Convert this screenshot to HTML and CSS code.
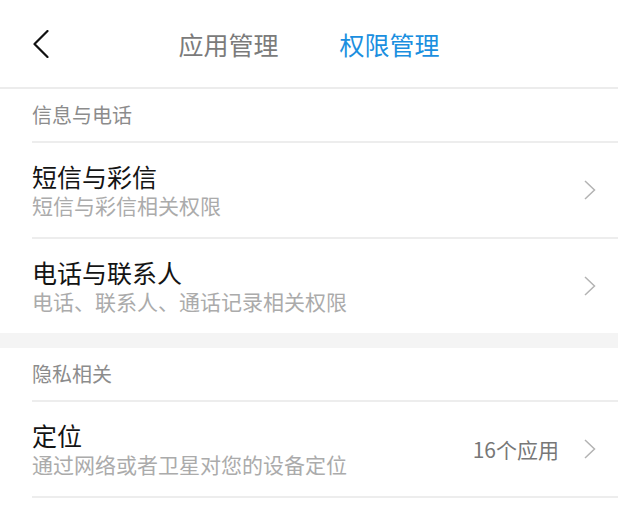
FILE: index.html
```html
<!DOCTYPE html>
<html lang="zh-CN">
<head>
<meta charset="utf-8">
<title>权限管理</title>
<link rel="stylesheet" href="styles.css">
</head>
<body>
<header class="topbar">
  <button class="back" aria-label="返回">
    <svg width="16" height="28" viewBox="0 0 16 28"><polyline points="14.5,1 1.5,14 14.5,27" fill="none" stroke="#111" stroke-width="2.2" stroke-linecap="round" stroke-linejoin="round"/></svg>
  </button>
  <nav class="tabs">
    <span class="tab">应用管理</span>
    <span class="tab active">权限管理</span>
  </nav>
  <span class="spacer"></span>
</header>

<section class="group">
  <div class="group-title">信息与电话</div>
  <div class="row">
    <div class="texts">
      <div class="title">短信与彩信</div>
      <div class="sub">短信与彩信相关权限</div>
    </div>
    <svg class="chev" width="12" height="20" viewBox="0 0 12 20"><polyline points="1,1 10.5,10 1,19" fill="none" stroke="#b3b3b3" stroke-width="1.5"/></svg>
  </div>
  <div class="row last">
    <div class="texts">
      <div class="title">电话与联系人</div>
      <div class="sub">电话、联系人、通话记录相关权限</div>
    </div>
    <svg class="chev" width="12" height="20" viewBox="0 0 12 20"><polyline points="1,1 10.5,10 1,19" fill="none" stroke="#b3b3b3" stroke-width="1.5"/></svg>
  </div>
</section>

<div class="band"></div>

<section class="group">
  <div class="group-title">隐私相关</div>
  <div class="row">
    <div class="texts">
      <div class="title">定位</div>
      <div class="sub">通过网络或者卫星对您的设备定位</div>
    </div>
    <span class="value">16个应用</span>
    <svg class="chev" width="12" height="20" viewBox="0 0 12 20"><polyline points="1,1 10.5,10 1,19" fill="none" stroke="#b3b3b3" stroke-width="1.5"/></svg>
  </div>
</section>
</body>
</html>
```

FILE: styles.css
```css
* { box-sizing: border-box; }

html, body {
  margin: 0;
  padding: 0;
  background: #ffffff;
  font-family: "Noto Sans CJK SC", "Noto Sans", sans-serif;
}

.topbar {
  height: 89px;
  display: grid;
  grid-template-columns: 1fr auto 1fr;
  align-items: center;
  border-bottom: 2px solid #ececec;
}

.back {
  justify-self: start;
  margin: 0 0 0 33px;
  padding: 0;
  border: 0;
  background: none;
  display: flex;
}

.tabs {
  display: flex;
  gap: 61px;
}

.tab {
  font-size: 25px;
  line-height: 30px;
  color: #7b7b7b;
}

.tab.active {
  color: #1b8fdf;
}

.group-title {
  margin-left: 32px;
  height: 54px;
  padding-top: 14px;
  font-size: 20px;
  line-height: 24px;
  color: #8c8c8c;
  border-bottom: 2px solid #ededed;
}

.row {
  margin-left: 32px;
  padding-right: 22px;
  height: 96px;
  display: flex;
  align-items: center;
  border-bottom: 2px solid #ededed;
}

.row.last {
  height: 94px;
  border-bottom: 0;
}

.texts {
  flex: 1;
  display: flex;
  flex-direction: column;
  gap: 1px;
  margin-top: -1px;
}

.title {
  font-size: 25px;
  line-height: 30px;
  color: #141414;
}

.sub {
  font-size: 21px;
  line-height: 26px;
  color: #ababab;
}

.value {
  font-size: 21px;
  line-height: 26px;
  color: #777777;
  margin-right: 25px;
}

.chev {
  display: block;
}

.band {
  height: 15px;
  background: #f4f4f4;
}
```
